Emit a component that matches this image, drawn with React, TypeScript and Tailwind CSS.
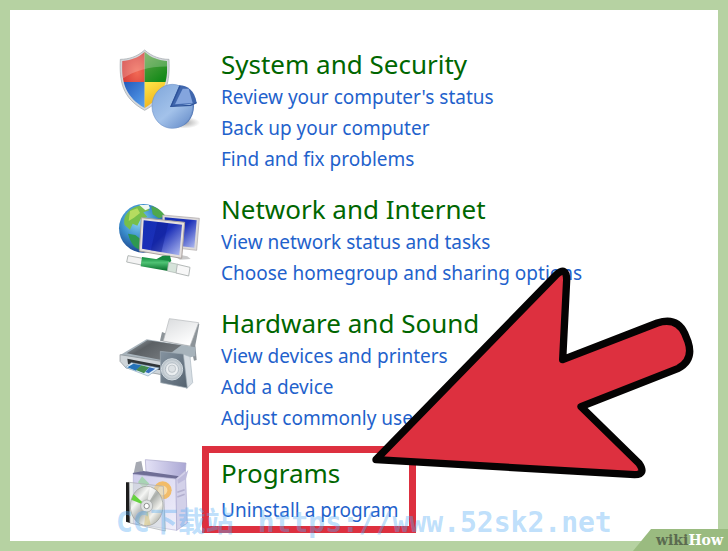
import type { ReactNode } from "react";

function SecurityIcon() {
  return (
    <svg viewBox="48 18 252 258" className="h-[86px] w-[84px]" aria-hidden="true">
      <defs>
        <clipPath id="shield">
          <path d="M134 36 C114 54 90 62 67 63 C64 120 72 168 134 204 C196 168 204 120 201 63 C178 62 154 54 134 36Z" />
        </clipPath>
        <radialGradient id="shieldRed" cx="0.7" cy="0.7" r="0.9">
          <stop offset="0" stopColor="#f26a55" />
          <stop offset="1" stopColor="#c8282c" />
        </radialGradient>
        <linearGradient id="shieldGreen" x2="0.6" y2="1">
          <stop offset="0" stopColor="#6aa84f" />
          <stop offset="1" stopColor="#138a18" />
        </linearGradient>
        <linearGradient id="shieldBlue" x2="0.9" y2="1">
          <stop offset="0" stopColor="#1f55b8" />
          <stop offset="1" stopColor="#5aa2ee" />
        </linearGradient>
        <linearGradient id="shieldYellow" x2="0.5" y2="1">
          <stop offset="0" stopColor="#ffe84a" />
          <stop offset="1" stopColor="#eda915" />
        </linearGradient>
        <linearGradient id="pie" x2="0.8" y2="1">
          <stop offset="0" stopColor="#7fa6da" />
          <stop offset="0.6" stopColor="#a3c2ea" />
          <stop offset="1" stopColor="#6b91cc" />
        </linearGradient>
        <radialGradient id="pieShadow">
          <stop offset="0" stopColor="#777" stopOpacity="0.7" />
          <stop offset="1" stopColor="#777" stopOpacity="0" />
        </radialGradient>
      </defs>
      <path
        d="M134 30 C112 50 86 58 61 58 C58 124 66 174 134 211 C202 174 210 124 207 58 C182 58 156 50 134 30Z"
        fill="#d4d8dc"
        stroke="#9fa4a9"
        strokeWidth="2"
      />
      <g clipPath="url(#shield)">
        <path d="M60 30H134V126H60Z" fill="url(#shieldRed)" />
        <path d="M134 30H210V126H134Z" fill="url(#shieldGreen)" />
        <path d="M60 126H134V210H60Z" fill="url(#shieldBlue)" />
        <path d="M134 126H210V210H134Z" fill="url(#shieldYellow)" />
        <path d="M60 30H210V80C150 78 100 92 60 122Z" fill="#fff" opacity="0.22" />
      </g>
      <ellipse cx="248" cy="248" rx="52" ry="18" fill="url(#pieShadow)" />
      <ellipse cx="226" cy="199" rx="56" ry="64" fill="#5379b8" />
      <ellipse cx="217" cy="199" rx="61" ry="66" fill="url(#pie)" stroke="#7396ca" strokeWidth="2" />
      <path d="M238 136 C262 136 284 152 290 188 L211 201Z" fill="#3f66ad" />
      <path d="M248 146 L266 146 L278 189 L225 193Z" fill="#84a5de" />
      <path d="M240 138 L213 199 L272 196 L290 188" fill="none" stroke="#2d5299" strokeWidth="4" />
    </svg>
  );
}

function NetworkIcon() {
  return (
    <svg viewBox="48 0 252 282" className="h-[94px] w-[84px]" aria-hidden="true">
      <defs>
        <radialGradient id="globe" cx="0.4" cy="0.35" r="0.7">
          <stop offset="0" stopColor="#8fd8f4" />
          <stop offset="0.5" stopColor="#3b8fcd" />
          <stop offset="1" stopColor="#173a86" />
        </radialGradient>
        <linearGradient id="screen" x2="1" y2="0.9">
          <stop offset="0" stopColor="#1430b4" />
          <stop offset="0.5" stopColor="#1b2fb8" />
          <stop offset="1" stopColor="#a9b4ee" />
        </linearGradient>
        <linearGradient id="plug" x2="0" y2="1">
          <stop offset="0" stopColor="#0f8a3c" />
          <stop offset="0.4" stopColor="#4fc274" />
          <stop offset="1" stopColor="#046b28" />
        </linearGradient>
      </defs>
      <circle cx="130" cy="112" r="73" fill="url(#globe)" />
      <path d="M82 66 C98 48 116 42 136 44 L148 58 L130 64 L142 78 L122 84 L112 104 L98 98 L90 116 L74 102 C70 88 74 76 82 66Z" fill="#77bf4b" />
      <path d="M90 60 L112 52 L120 66 L102 80 L86 90Z" fill="#b6dc60" />
      <path d="M84 128 L106 132 L124 146 L120 176 C104 172 92 158 84 128Z" fill="#2e9850" />
      <path d="M154 46 C174 50 188 62 196 76 L176 82 L158 70Z" fill="#4fa84d" />
      <path d="M118 42 L146 42 L150 52 L136 58Z" fill="#eff8f0" />
      <path d="M188 72 L298 82 L290 178 L186 166Z" fill="#dcd9da" stroke="#aaa4a4" strokeWidth="2" />
      <path d="M194 79 L290 88 L283 170 L194 160Z" fill="url(#screen)" />
      <path d="M146 180 L214 190 L240 206 L272 204 L262 196 L220 188Z" fill="#c9c9c9" />
      <path d="M124 80 L254 94 L245 202 L118 180Z" fill="#e4dfdd" stroke="#aaa29e" strokeWidth="3" />
      <path d="M131 88 L246 101 L238 193 L126 173Z" fill="url(#screen)" />
      <path d="M172 93 L205 97 L184 184 L152 178Z" fill="#0d1d92" opacity="0.45" />
      <path d="M84 194 L128 202 L124 222 L80 213Z" fill="#f3f3f3" stroke="#b4b9b8" strokeWidth="3" />
      <path d="M166 206 L188 194 L210 194 L214 210 L196 224Z" fill="#168841" />
      <path d="M126 198 L208 210 L204 240 L122 226Z" fill="url(#plug)" />
      <path d="M206 214 L234 220 L230 246 L202 240Z" fill="#d6e3da" stroke="#a8b2ac" strokeWidth="2" />
      <path d="M232 220 L270 229 L266 255 L228 246Z" fill="#f7f7f7" stroke="#b4b9b8" strokeWidth="3" />
    </svg>
  );
}

function PrinterIcon() {
  return (
    <svg viewBox="48 -3 252 270" className="h-[90px] w-[84px]" aria-hidden="true">
      <defs>
        <linearGradient id="lid" x2="1" y2="0.6">
          <stop offset="0" stopColor="#a4adb4" />
          <stop offset="0.4" stopColor="#5b6064" />
          <stop offset="1" stopColor="#777c80" />
        </linearGradient>
        <linearGradient id="paper" x2="0.6" y2="1">
          <stop offset="0" stopColor="#d9dbdd" />
          <stop offset="1" stopColor="#ffffff" />
        </linearGradient>
        <linearGradient id="speaker" x2="1" y2="1">
          <stop offset="0" stopColor="#8593a0" />
          <stop offset="1" stopColor="#54626f" />
        </linearGradient>
        <radialGradient id="cone">
          <stop offset="0" stopColor="#bfc6cb" />
          <stop offset="0.45" stopColor="#eef1f3" />
          <stop offset="1" stopColor="#aeb9c1" />
        </radialGradient>
      </defs>
      <path d="M186 78 L180 104 L272 122 L282 164 L290 162 L286 118 L298 54 L290 50 L272 112Z" fill="#8d9499" />
      <path d="M208 38 L296 50 L270 120 L190 105Z" fill="url(#paper)" stroke="#b4b7ba" strokeWidth="2" />
      <path d="M62 146 L140 100 L286 124 L286 150 L184 178 L66 158Z" fill="#a7b3bb" />
      <path d="M80 142 L142 103 L244 118 L184 162Z" fill="url(#lid)" />
      <path d="M60 146 L184 166 L184 206 L78 186 L60 166Z" fill="#cfd5d9" stroke="#858c91" strokeWidth="2" />
      <path d="M82 158 L182 178 L180 192 L84 174Z" fill="#303538" />
      <path d="M94 170 L178 186 L144 210 L76 184Z" fill="#dfedf8" stroke="#8aa6bc" strokeWidth="2" />
      <path d="M100 173 L124 178 L108 194 L82 184Z" fill="#2572b8" />
      <path d="M124 178 L148 184 L132 202 L108 192Z" fill="#438b50" />
      <path d="M148 184 L166 188 L146 202 L136 198Z" fill="#356fbd" />
      <path d="M248 144 L270 152 L278 230 L260 248Z" fill="#d6dde3" stroke="#aab6c0" strokeWidth="2" />
      <path d="M181 136 L250 144 L262 246 L182 230Z" fill="url(#speaker)" stroke="#a2adb7" strokeWidth="2" />
      <circle cx="216" cy="190" r="32" fill="url(#cone)" stroke="#d2dae0" strokeWidth="3" />
      <circle cx="216" cy="190" r="20" fill="none" stroke="#b4bec6" strokeWidth="3" />
      <circle cx="216" cy="188" r="11" fill="#dce1e4" stroke="#b2b9bf" strokeWidth="2" />
    </svg>
  );
}

function ProgramsIcon() {
  return (
    <svg viewBox="48 -15 252 261" className="h-[87px] w-[84px]" aria-hidden="true">
      <defs>
        <linearGradient id="boxFront" x2="1" y2="1">
          <stop offset="0" stopColor="#cfcdec" />
          <stop offset="1" stopColor="#f1f0fb" />
        </linearGradient>
        <linearGradient id="boxFlap" x2="1">
          <stop offset="0" stopColor="#e4e2f6" />
          <stop offset="1" stopColor="#aaa7d4" />
        </linearGradient>
        <linearGradient id="disc" x2="1" y2="1">
          <stop offset="0" stopColor="#8b908e" />
          <stop offset="0.3" stopColor="#f5f6f4" />
          <stop offset="0.5" stopColor="#aaaeaa" />
          <stop offset="0.7" stopColor="#f3f3ee" />
          <stop offset="1" stopColor="#86897f" />
        </linearGradient>
      </defs>
      <path d="M136 26 L258 36 L256 60 L226 82 L138 62Z" fill="url(#boxFlap)" stroke="#a8a5c8" strokeWidth="2" />
      <path d="M108 34 L124 30 L130 60 L100 72Z" fill="#a6a9b2" />
      <path d="M98 66 L130 60 L238 76 L226 84 L100 72Z" fill="#6f6e96" />
      <path d="M100 70 L228 84 L230 238 L100 218Z" fill="url(#boxFront)" stroke="#b7b5d6" strokeWidth="2" />
      <path d="M228 84 L256 58 L262 216 L230 238Z" fill="#d3d1e9" stroke="#aaa7ce" strokeWidth="2" />
      <path d="M232 86 L256 67 L265 56 L258 84 L234 98Z" fill="#bebbdc" />
      <path d="M232 124 L254 116 M232 138 L254 130" stroke="#b3b0cf" strokeWidth="5" />
      <path d="M114 94 L126 76 L148 98 L132 112Z" fill="#a8d4b4" />
      <circle cx="188" cy="118" r="27" fill="#f2bc69" />
      <circle cx="188" cy="118" r="14" fill="#f8dba7" />
      <path d="M78 94 L88 94 L90 216 L78 212Z" fill="#1c1c1c" />
      <path d="M88 94 L190 106 L196 240 L90 216Z" fill="#d3dcd8" fillOpacity="0.5" stroke="#a7a9b0" strokeWidth="2" />
      <ellipse cx="140" cy="165" rx="49" ry="59" fill="url(#disc)" stroke="#989b98" strokeWidth="2" />
      <path d="M140 165 L94 146 L101 130Z" fill="#65d33d" />
      <path d="M140 165 L150 108 L168 118Z" fill="#fff" opacity="0.7" />
      <path d="M140 165 L132 223 L152 222Z" fill="#d9c98f" opacity="0.7" />
      <circle cx="140" cy="165" r="18" fill="#dfe2e2" stroke="#a2a5a5" strokeWidth="2" />
      <circle cx="140" cy="165" r="8" fill="#fff" stroke="#8e9191" strokeWidth="3" />
    </svg>
  );
}

type CategoryProps = {
  title: string;
  links: string[];
  icon: ReactNode;
};

function Category({ title, links, icon }: CategoryProps) {
  return (
    <section className="flex items-start gap-[21px]">
      {icon}
      <div>
        <h2 className="text-[26px] leading-9 text-[#006600]">{title}</h2>
        <ul>
          {links.map((link) => (
            <li key={link} className="text-[19px] leading-[31px]">
              <a href="#" className="text-[#1f62cc] hover:underline">
                {link}
              </a>
            </li>
          ))}
        </ul>
      </div>
    </section>
  );
}

export default function App() {
  return (
    <div className="relative flex min-h-screen overflow-hidden bg-[#b6d2a2] p-[10px] font-['Noto_Sans','Open_Sans',sans-serif] whitespace-nowrap">
      <main className="relative flex-1 bg-white pt-9 pl-[106px]">
        <div className="flex flex-col gap-4">
          <Category
            title="System and Security"
            links={["Review your computer's status", "Back up your computer", "Find and fix problems"]}
            icon={<SecurityIcon />}
          />
          <Category
            title="Network and Internet"
            links={["View network status and tasks", "Choose homegroup and sharing options"]}
            icon={<NetworkIcon />}
          />
          <Category
            title="Hardware and Sound"
            links={["View devices and printers", "Add a device", "Adjust commonly used"]}
            icon={<PrinterIcon />}
          />
        </div>

        {/* Highlighted category */}
        <section className="mt-3 flex items-start gap-[2px]">
          <ProgramsIcon />
          <div className="w-[214px] border-7 border-[#dd303f] pt-[2px] pl-3">
            <h2 className="text-[26px] leading-9 text-[#006600]">Programs</h2>
            <a href="#" className="mt-1 block text-[19px] leading-[31px] text-[#1f62cc] hover:underline">
              Uninstall a program
            </a>
          </div>
        </section>

        {/* Pointer arrow */}
        <svg
          viewBox="0 0 1104 720"
          className="pointer-events-none absolute top-[240px] left-[350px] h-[240px] w-[368px]"
          aria-hidden="true"
        >
          <path
            d="M48 629 L590 73 Q620 48 620 90 L608 329 L892 219 Q950 200 974 250 L984 275 Q1002 330 955 355 L663 470 L837 640 Q860 673 824 674 Z"
            fill="#dd303f"
            stroke="#050303"
            strokeWidth="22"
            strokeLinejoin="round"
          />
        </svg>

        <p className="pointer-events-none absolute top-[495px] left-[106px] flex gap-6 font-['DejaVu_Sans_Mono','Noto_Sans_CJK_SC',monospace] text-[28px] leading-9 font-bold text-[#57adf5]/40">
          <span>CC下载站</span>
          <span>https://www.52sk2.net</span>
        </p>
      </main>

      {/* Corner badge */}
      <div className="absolute right-0 bottom-0 flex h-[22px] w-[95px] items-center justify-end bg-[#9abb80] pr-[5px] font-['DejaVu_Serif',serif] text-[14px] font-bold text-white [clip-path:polygon(18px_0,100%_0,100%_100%,0_100%)]">
        <span className="text-[#5b6b50]">wiki</span>
        <span>How</span>
      </div>
    </div>
  );
}
